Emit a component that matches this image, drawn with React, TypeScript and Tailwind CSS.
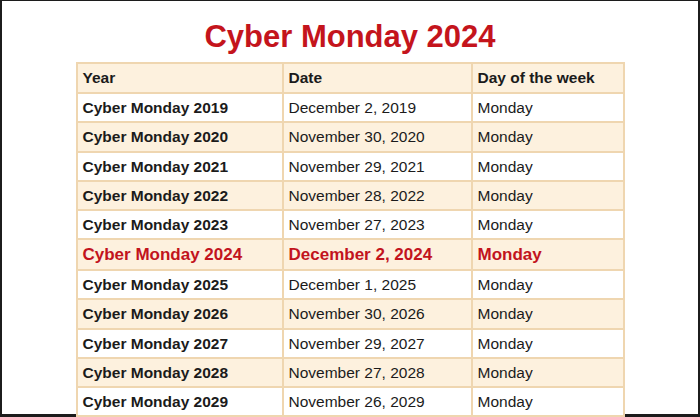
const ROWS: { year: string; date: string; day: string; hot?: boolean }[] = [
  { year: "Cyber Monday 2019", date: "December 2, 2019", day: "Monday" },
  { year: "Cyber Monday 2020", date: "November 30, 2020", day: "Monday" },
  { year: "Cyber Monday 2021", date: "November 29, 2021", day: "Monday" },
  { year: "Cyber Monday 2022", date: "November 28, 2022", day: "Monday" },
  { year: "Cyber Monday 2023", date: "November 27, 2023", day: "Monday" },
  { year: "Cyber Monday 2024", date: "December 2, 2024", day: "Monday", hot: true },
  { year: "Cyber Monday 2025", date: "December 1, 2025", day: "Monday" },
  { year: "Cyber Monday 2026", date: "November 30, 2026", day: "Monday" },
  { year: "Cyber Monday 2027", date: "November 29, 2027", day: "Monday" },
  { year: "Cyber Monday 2028", date: "November 27, 2028", day: "Monday" },
  { year: "Cyber Monday 2029", date: "November 26, 2029", day: "Monday" },
];

const cell = "border-2 border-[#efd6b0] px-[5px] align-middle text-left";

export default function App() {
  return (
    <div className="h-[417px] w-[700px] bg-white border-t border-l-2 border-r-2 border-b-[3px] border-[#1c1c1c] font-['Liberation_Sans',Arial,sans-serif] text-[#1b1b1b]">
      <h1 className="pt-[20px] text-center text-[31px] leading-[31px] font-bold text-[#c4141c]">Cyber Monday 2024</h1>
      <table className="relative z-10 mx-auto mt-[10px] w-[547px] table-fixed border-collapse text-[15.5px]">
        <colgroup>
          <col className="w-[206px]" />
          <col className="w-[189px]" />
          <col className="w-[152px]" />
        </colgroup>
        <thead>
          <tr className="h-[30px] bg-[#fdf1de] font-bold">
            <th className={cell}>Year</th>
            <th className={cell}>Date</th>
            <th className={cell}>Day of the week</th>
          </tr>
        </thead>
        <tbody>
          {ROWS.map((r, i) => (
            <tr
              key={r.year}
              className={
                (i % 2 === 1 ? "bg-[#fdf1de] " : "bg-white ") +
                (r.hot ? "h-[30.5px] text-[17px] font-bold text-[#c2141d]" : "h-[29.3px]")
              }
            >
              <td className={cell + " font-bold"}>{r.year}</td>
              <td className={cell}>{r.date}</td>
              <td className={cell}>{r.day}</td>
            </tr>
          ))}
        </tbody>
      </table>
    </div>
  );
}
